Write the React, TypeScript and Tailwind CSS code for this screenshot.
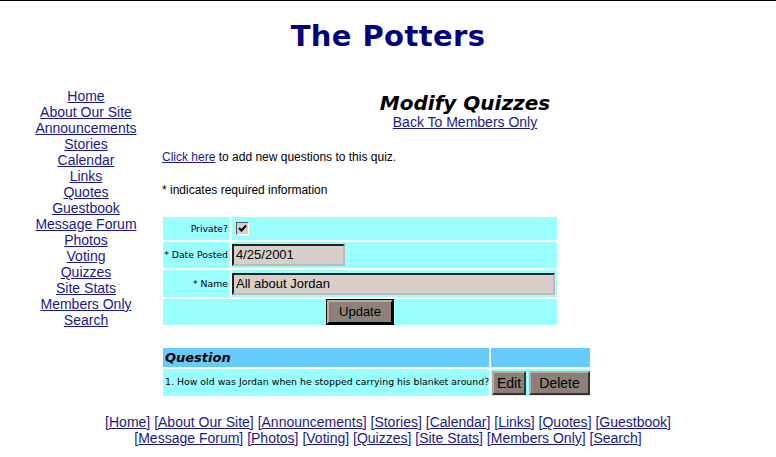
import React from "react";

const navItems = [
  "Home",
  "About Our Site",
  "Announcements",
  "Stories",
  "Calendar",
  "Links",
  "Quotes",
  "Guestbook",
  "Message Forum",
  "Photos",
  "Voting",
  "Quizzes",
  "Site Stats",
  "Members Only",
  "Search",
];

const footer1 = ["Home", "About Our Site", "Announcements", "Stories", "Calendar", "Links", "Quotes", "Guestbook"];
const footer2 = ["Message Forum", "Photos", "Voting", "Quizzes", "Site Stats", "Members Only", "Search"];

const arial = "font-['Liberation_Sans',Arial,sans-serif]";
const verdana = "font-['DejaVu_Sans',Verdana,sans-serif]";

function FooterLine({ items }: { items: string[] }) {
  return (
    <div className="text-center whitespace-nowrap text-[#1a1a8c]">
      {items.map((it, i) => (
        <React.Fragment key={it}>
          {i > 0 ? " " : ""}[<a className="underline">{it}</a>]
        </React.Fragment>
      ))}
    </div>
  );
}

export default function App() {
  return (
    <div className={`w-[776px] h-[457px] bg-white overflow-hidden border-t border-black ${arial}`}>
      <div className="flex justify-center pt-[17px] h-[87px]">
        <h1 className={`${verdana} font-bold text-[29px] leading-[36px] tracking-[0.4px] text-[#000080]`}>The Potters</h1>
      </div>
      <div className="flex">
        <div className="w-[160px] pl-[12px] flex flex-col items-center text-[14px] leading-[16px] text-[#1a1a8c]">
          {navItems.map((n) => (
            <a key={n} className="underline whitespace-nowrap">
              {n}
            </a>
          ))}
        </div>
        <div className="w-[606px] ml-[2px] pt-[4px]">
          <div className="flex flex-col items-center">
            <div className={`${verdana} font-bold italic text-[20px] leading-[22px] text-black`}>Modify Quizzes</div>
            <a className="underline text-[14px] leading-[16px] text-[#1a1a8c]">Back To Members Only</a>
          </div>
          <div className="text-[12px] leading-[14px] mt-[20px] text-black">
            <a className="underline text-[#1a1a8c]">Click here</a> to add new questions to this quiz.
          </div>
          <div className="text-[12px] leading-[14px] mt-[19px] text-black">* indicates required information</div>

          <div className={`mt-[20px] ml-[1px] w-[394px] grid grid-cols-[67px_1fr] gap-[2px] ${verdana} text-[9.3px] text-black`}>
            <div className="bg-[#99ffff] h-[23px] flex items-center justify-end pr-[2px]">Private?</div>
            <div className="bg-[#99ffff] h-[23px] flex items-center pl-[4px]">
              <span className="w-[13px] h-[13px] bg-[#d8d0c8] border border-t-[#555] border-l-[#555] border-b-white border-r-white flex items-center justify-center">
                <svg width="9" height="9" viewBox="0 0 9 9">
                  <path d="M1 4 L3.5 6.5 L8 1.5" stroke="black" strokeWidth="2" fill="none" />
                </svg>
              </span>
            </div>
            <div className="bg-[#99ffff] h-[26px] flex items-center justify-end pr-[2px] whitespace-nowrap">* Date Posted</div>
            <div className="bg-[#99ffff] h-[26px] flex items-center">
              <div className={`w-[113px] h-[22px] bg-[#d8cfc9] border-2 border-t-[#222] border-l-[#222] border-b-[#bbb] border-r-[#bbb] ${arial} text-[13px] leading-[18px] pl-[2px] text-black`}>
                4/25/2001
              </div>
            </div>
            <div className="bg-[#99ffff] h-[27px] flex items-center justify-end pr-[2px]">* Name</div>
            <div className="bg-[#99ffff] h-[27px] flex items-center">
              <div className={`w-[323px] h-[22px] bg-[#d8cfc9] border-2 border-t-[#222] border-l-[#222] border-b-[#bbb] border-r-[#bbb] ${arial} text-[13px] leading-[18px] pl-[2px] text-black`}>
                All about Jordan
              </div>
            </div>
            <div className="col-span-2 bg-[#99ffff] h-[26px] flex items-center justify-center">
              <button className={`w-[66px] h-[24px] bg-[#8c8079] border-2 border-t-[#b8aea6] border-l-[#b8aea6] border-b-black border-r-black outline outline-1 outline-black ${arial} text-[13px] text-black`}>
                Update
              </button>
            </div>
          </div>

          <div className={`mt-[23px] ml-[1px] w-[427px] grid grid-cols-[326px_1fr] gap-x-[2px] gap-y-[2px] ${verdana}`}>
            <div className="bg-[#66ccff] h-[19px] flex items-center pl-[2px] text-[13px] font-bold italic text-black">Question</div>
            <div className="bg-[#66ccff] h-[19px]"></div>
            <div className="bg-[#99ffff] h-[27px] flex items-center pl-[2px] text-[9.4px] whitespace-nowrap text-black">
              1. How old was Jordan when he stopped carrying his blanket around?
            </div>
            <div className="bg-[#99ffff] h-[27px] flex items-center gap-[3px] pl-[1px]">
              <button className={`w-[34px] h-[24px] bg-[#8c8079] border-2 border-t-[#b8aea6] border-l-[#b8aea6] border-b-[#333] border-r-[#333] ${arial} text-[14px] text-black`}>
                Edit
              </button>
              <button className={`w-[61px] h-[24px] bg-[#8c8079] border-2 border-t-[#b8aea6] border-l-[#b8aea6] border-b-[#333] border-r-[#333] ${arial} text-[14px] text-black`}>
                Delete
              </button>
            </div>
          </div>
        </div>
      </div>
      <div className="mt-[18px] flex flex-col items-center text-[14px] leading-[16px]">
        <FooterLine items={footer1} />
        <FooterLine items={footer2} />
      </div>
    </div>
  );
}
